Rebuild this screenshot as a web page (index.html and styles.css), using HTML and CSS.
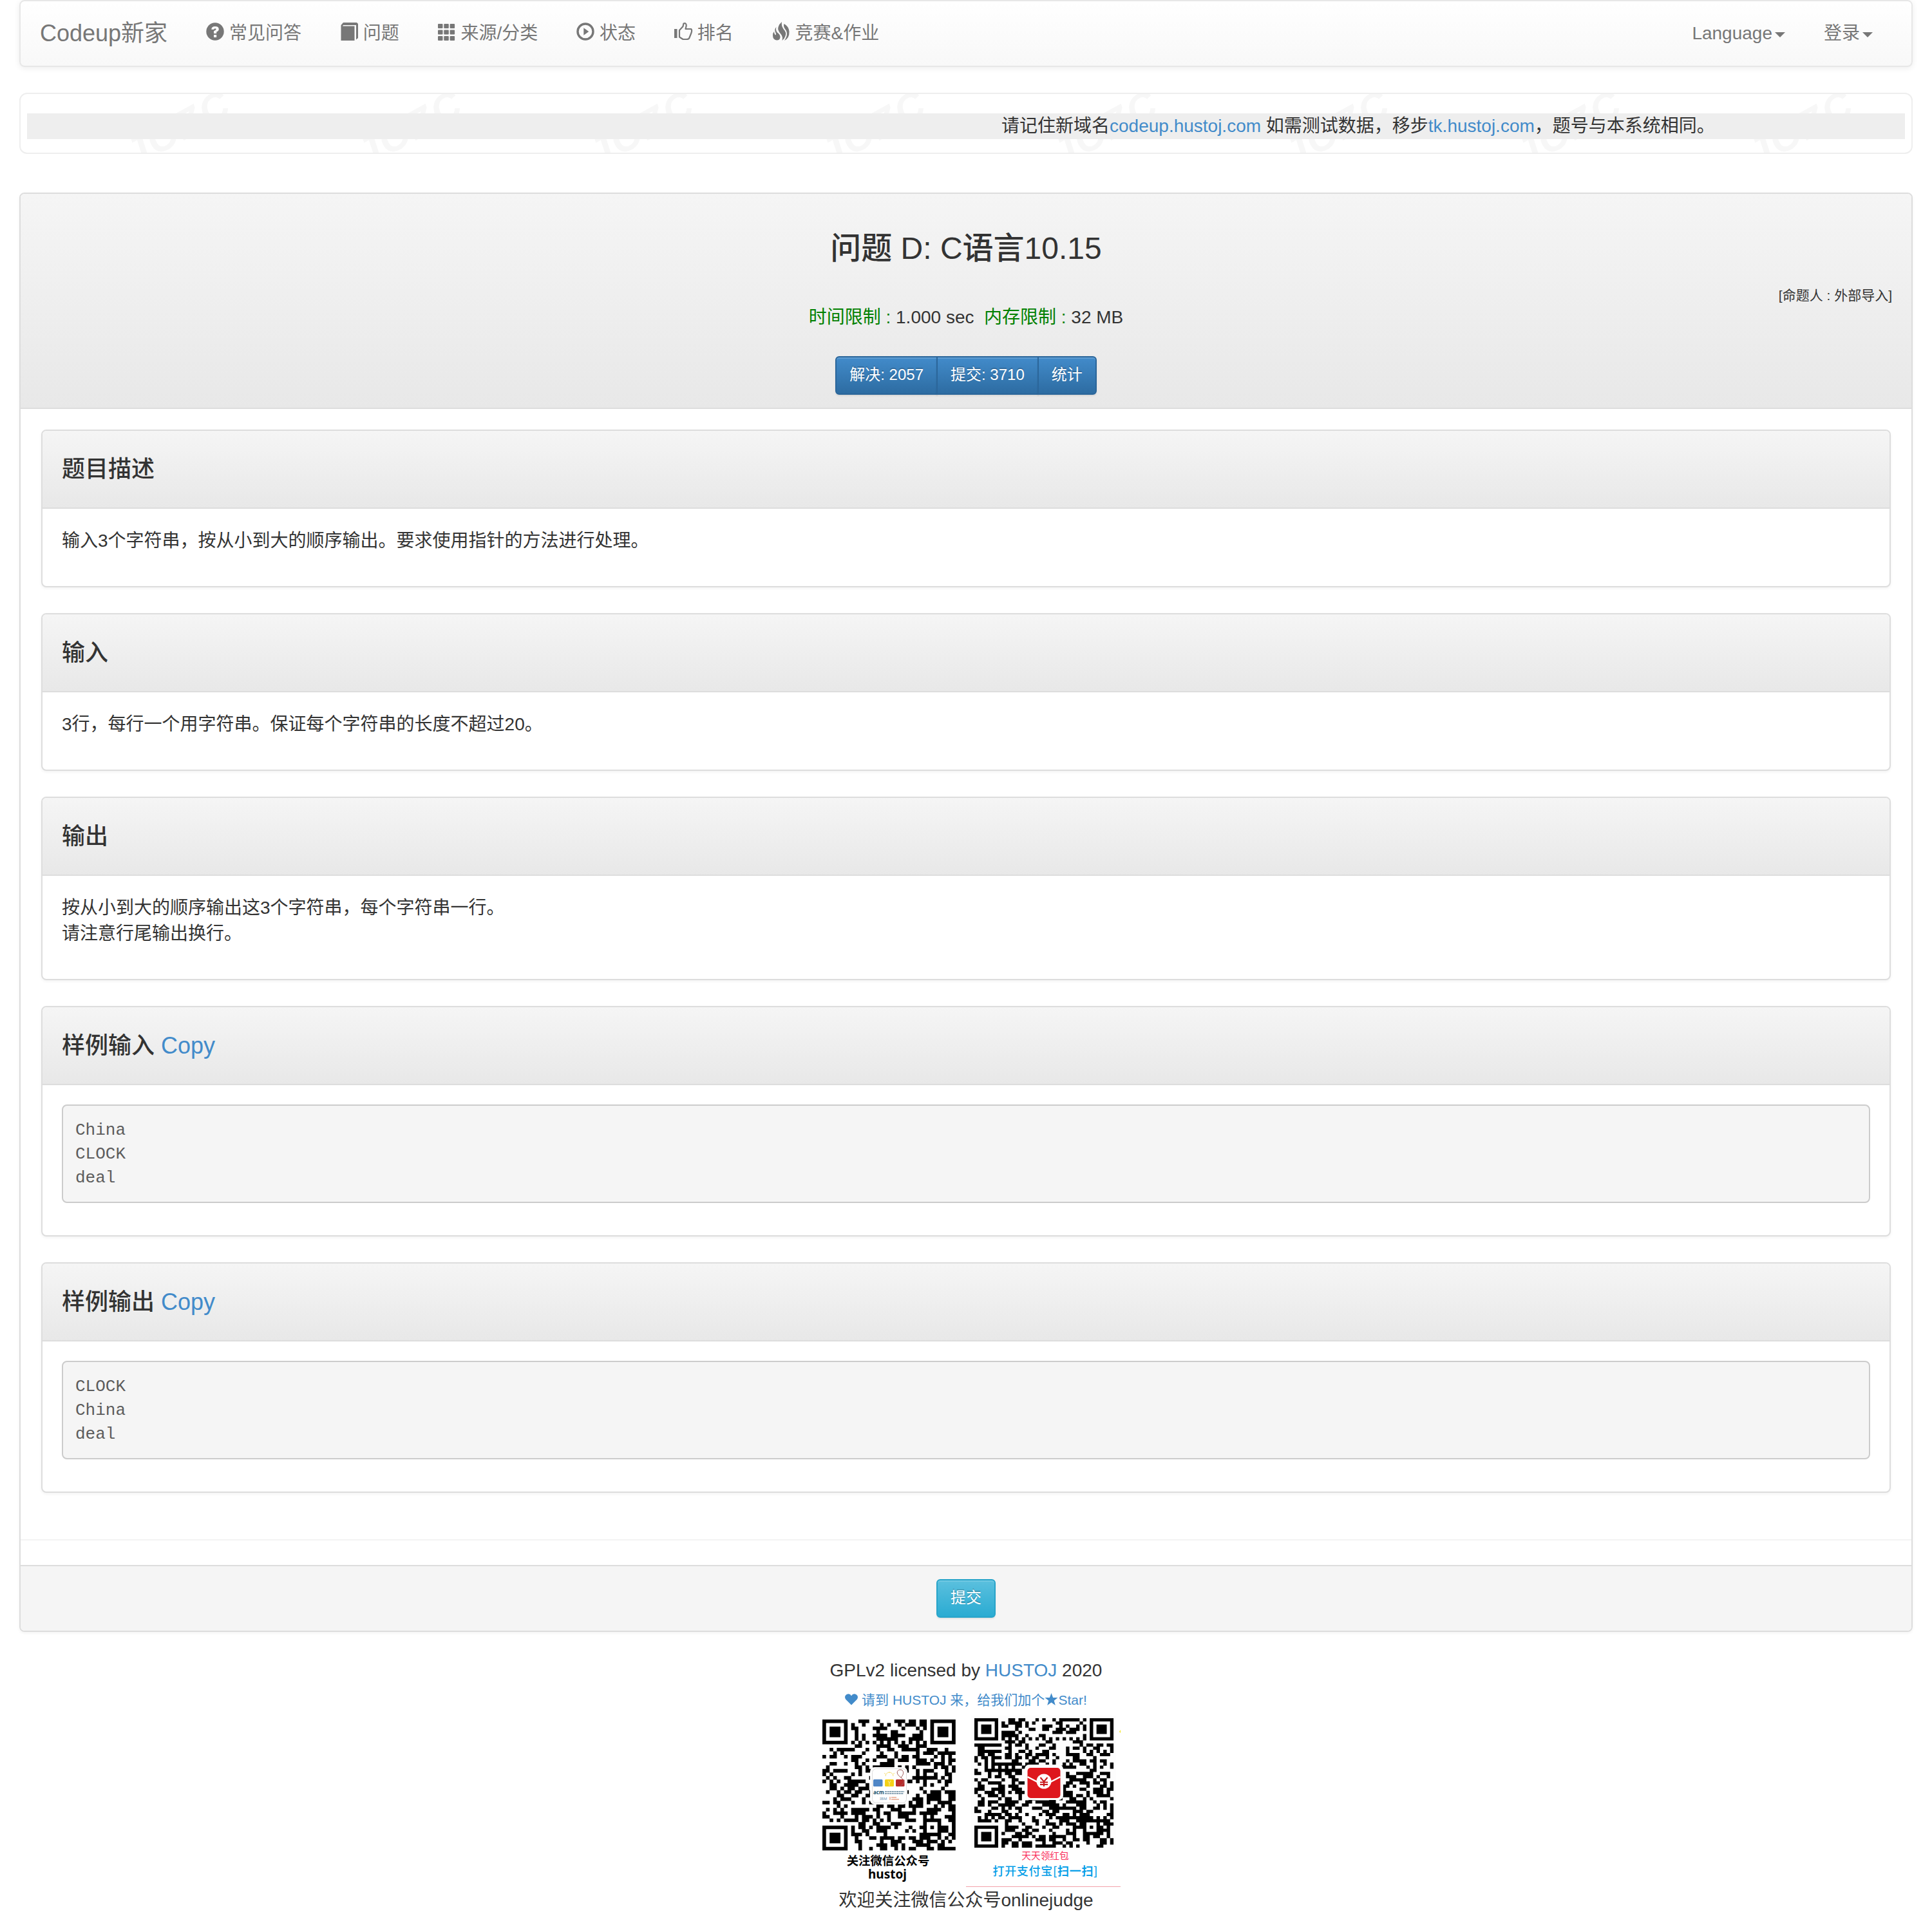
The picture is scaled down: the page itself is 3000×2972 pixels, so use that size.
FILE: index.html
```html
<!DOCTYPE html>
<html lang="zh-CN">
<head>
<meta charset="utf-8">
<title>问题 D: C语言10.15</title>
<link rel="stylesheet" href="styles.css">
</head>
<body>
<div class="container">
  <nav class="navbar">
    <a class="brand">Codeup新家</a>
    <ul class="nav">
      <li><svg class="icon" viewBox="0 0 28 28"><circle cx="14" cy="14" r="13.7" fill="currentColor"/><path d="M8.3 10.8Q8.3 6 14 6Q19.8 6 19.8 10.4Q19.8 13 16.2 14.6V17H12V13.2Q15.6 12 15.6 10.6Q15.6 9.3 14 9.3Q12.4 9.3 12.2 10.8ZM12 19H16.2V23H12Z" fill="#fbfbfb"/></svg> 常见问答</li>
      <li><svg class="icon" viewBox="0 0 28 28"><path d="M1.500 28V4L5 0H26L28 2V24L25 26.500V4H5L4 5.500H22.500V28Z" fill="currentColor"/></svg> 问题</li>
      <li><svg class="icon" viewBox="0 0 28 28"><g fill="currentColor"><rect x="0" y="2" width="7.5" height="7" rx="1"/><rect x="9.3" y="2" width="7.5" height="7" rx="1"/><rect x="18.6" y="2" width="7.5" height="7" rx="1"/><rect x="0" y="11.5" width="7.5" height="7" rx="1"/><rect x="9.3" y="11.5" width="7.5" height="7" rx="1"/><rect x="18.6" y="11.5" width="7.5" height="7" rx="1"/><rect x="0" y="21" width="7.5" height="7" rx="1"/><rect x="9.3" y="21" width="7.5" height="7" rx="1"/><rect x="18.6" y="21" width="7.5" height="7" rx="1"/></g></svg> 来源/分类</li>
      <li><svg class="icon" viewBox="0 0 28 28"><circle cx="14" cy="14" r="12" fill="none" stroke="currentColor" stroke-width="3.4"/><path d="M11.3 8.3L19.3 14L11.3 19.7Z" fill="currentColor"/></svg> 状态</li>
      <li><svg class="icon" viewBox="0 0 28 28"><path d="M0 10H4.5V24H0Z" fill="currentColor"/><path d="M8 12L13.5 6L14.5 1.5Q19 .2 18.7 5L17.5 10H26Q28 11.5 26.5 16L23.5 23.5Q23 26 19 26H13.5L8 22.5Z" fill="none" stroke="currentColor" stroke-width="2.2" stroke-linejoin="round"/></svg> 排名</li>
      <li><svg class="icon" viewBox="0 0 28 28"><path d="M15-1Q14 5 17.500 10Q23 16 20.500 21Q19.500 24.500 15.500 28Q17 22 13.500 18Q8 12 9.500 7Q11 2 15-1ZM6.500 7Q5 11 7.500 15Q13 19 12.500 23Q12 27.500 7 27.500Q1 27 1 20Q1 16 3 14Q3 18 5 19.500Q7 19 5 15Q3 10 6.500 7ZM18.500 2Q26 6 26.500 14Q27 24 19 28Q23 22 23 17Q23 13 20 10Q17 6 18.500 2Z" fill="currentColor"/></svg> 竞赛&amp;作业</li>
    </ul>
    <ul class="nav nav-right">
      <li>Language<span class="caret"></span></li>
      <li>登录<span class="caret"></span></li>
    </ul>
  </nav>

  <section class="notice">
    <svg class="notice-mark" width="2936" height="92"><defs><pattern id="mark" width="360" height="92" patternUnits="userSpaceOnUse"><text x="176" y="115" transform="rotate(-29 176 115)" textLength="176">JOZC</text></pattern></defs><rect width="2936" height="92" fill="url(#mark)"/></svg>
    <p class="marquee">请记住新域名<a>codeup.hustoj.com</a> 如需测试数据，移步<a>tk.hustoj.com</a>，题号与本系统相同。</p>
  </section>

  <main class="panel problem">
    <header class="panel-heading problem-heading">
      <h1>问题 D: C语言10.15</h1>
      <div class="author">[命题人 : 外部导入]</div>
      <div class="limits"><span>时间限制 : </span>1.000 sec&nbsp; <span>内存限制 : </span>32 MB</div>
      <div class="btn-group"><a class="btn primary">解决: 2057</a><a class="btn primary">提交: 3710</a><a class="btn primary">统计</a></div>
    </header>
    <div class="problem-body">
      <section class="panel">
        <header class="panel-heading"><h2>题目描述</h2></header>
        <div class="panel-body"><p>输入3个字符串，按从小到大的顺序输出。要求使用指针的方法进行处理。</p></div>
      </section>
      <section class="panel">
        <header class="panel-heading"><h2>输入</h2></header>
        <div class="panel-body"><p>3行，每行一个用字符串。保证每个字符串的长度不超过20。</p></div>
      </section>
      <section class="panel">
        <header class="panel-heading"><h2>输出</h2></header>
        <div class="panel-body"><p>按从小到大的顺序输出这3个字符串，每个字符串一行。<br>请注意行尾输出换行。</p></div>
      </section>
      <section class="panel">
        <header class="panel-heading"><h2>样例输入 <a>Copy</a></h2></header>
        <div class="panel-body"><pre>China
CLOCK
deal</pre></div>
      </section>
      <section class="panel">
        <header class="panel-heading"><h2>样例输出 <a>Copy</a></h2></header>
        <div class="panel-body"><pre>CLOCK
China
deal</pre></div>
      </section>
    </div>
    <hr>
    <footer class="panel-footer"><a class="btn info">提交</a></footer>
  </main>

  <footer class="page-footer">
    <div>GPLv2 licensed by <a>HUSTOJ</a> 2020</div>
    <div class="star-line"><a><svg class="icon-small" viewBox="0 0 20 20"><path d="M10 18.500L1.500 10Q-1 7 .8 3.700Q2.500 1 5.500 1.200Q8.500 1.400 10 4.300Q11.500 1.400 14.500 1.200Q17.500 1 19.200 3.700Q21 7 18.500 10Z" fill="currentColor"/></svg> 请到 HUSTOJ 来，给我们加个<svg class="icon-small star" viewBox="0 0 20 20"><path d="M10 0L12.600 7H20L14.200 11.700L16.300 19L10 14.600L3.700 19L5.800 11.700L0 7H7.400Z" fill="currentColor"/></svg>Star!</a></div>
    <div class="codes">
      <svg width="240" height="270" viewBox="0 0 240 270">
        <path class="qr" data-size="37" data-seed="2057" transform="translate(17 10) scale(5.586 5.490)"/>
        <rect x="91" y="84" width="58" height="58" rx="7" fill="#fff"/>
        <rect x="94.500" y="86.500" width="53" height="53" rx="6" fill="#fff" stroke="#ddd"/>
        <rect x="96" y="103" width="14.500" height="11" rx="1.500" fill="#4f86c6"/>
        <rect x="114" y="103" width="14" height="11" rx="1.500" fill="#f5d117"/>
        <path d="M115 98A6 6 0 0 1 127 98M121 93V91M115 95L113 93M127 95L129 93" fill="none" stroke="#f7df72"/>
        <path d="M119 105L121 109L123 105M121 109V113" fill="none" stroke="#f5e99d"/>
        <rect x="131" y="103" width="13.500" height="11" rx="1.500" fill="#b72a2a"/>
        <path d="M139 100C130 94 133 88 138 88S145 94 139 100L143 104Q145 109 138 113" fill="none" stroke="#9e5a5a"/>
        <text x="96" y="126" class="acm">acm</text>
        <path d="M114 122H144M114 125H143" stroke="#66879c" stroke-width="1.300" stroke-dasharray="3 .6"/>
        <text x="106" y="135" class="ibm">IBM</text>
        <path d="M122 130V135M124 131H132M124 134H136" stroke="#dd7950"/>
        <text x="119" y="236" class="cap-black">关注微信公众号</text>
        <text x="118" y="257" class="cap-black latin">hustoj</text>
      </svg>
      <svg width="240" height="270" viewBox="0 0 240 270">
        <rect x="8" y="4" width="225" height="209" fill="#fdfdfd"/>
        <path class="qr" data-size="41" data-seed="3710" transform="translate(13 8) scale(5.268 4.902)"/>
        <rect x="91" y="80" width="60" height="55" rx="7" fill="#fdfdfd"/>
        <rect x="95.500" y="85" width="51" height="47" rx="5" fill="#de171d"/>
        <path d="M95.500 99L111 107H131L146.500 99" fill="none" stroke="#fff" stroke-width="2.500"/>
        <circle cx="121" cy="106" r="11.500" fill="#fff"/>
        <path d="M115.500 100L121 106.500L126.500 100M121 106V114M115 107.500H127M115 111H127" fill="none" stroke="#c7161b" stroke-width="2"/>
        <text x="123" y="227" class="cap-pink">天天领红包</text>
        <text x="123" y="252" class="cap-blue" textLength="163">打开支付宝[<tspan font-weight="700">扫一扫</tspan>]</text>
        <path d="M238 29L240 26V31Z" fill="#f4e524"/>
        <path d="M0 269.500H240" stroke="#f3a3ab"/>
      </svg>
    </div>
    <div class="follow">欢迎关注微信公众号onlinejudge</div>
  </footer>
</div>
<script src="qr.js"></script>
</body>
</html>
```
FILE: qr.js
```js
// Fills each .qr path with a module grid: finders, timing, alignment and data cells.
document.querySelectorAll('.qr').forEach(function (path) {
  var n = +path.dataset.size;
  var state = +path.dataset.seed;
  var d = '';
  function random() {
    state = (Math.imul(state, 1664525) + 1013904223) >>> 0;
    return state / 4294967296;
  }
  function ring(x, y, cx, cy) {
    return Math.max(Math.abs(x - cx), Math.abs(y - cy));
  }
  for (var y = 0; y < n; y++) {
    for (var x = 0; x < n; x++) {
      var on = random() < 0.5;
      if (x === 6 || y === 6) on = (x + y) % 2 === 0;
      var align = ring(x, y, n - 7, n - 7);
      if (align <= 2) on = align !== 1;
      [[3, 3], [n - 4, 3], [3, n - 4]].forEach(function (c) {
        var r = ring(x, y, c[0], c[1]);
        if (r <= 4) on = r !== 2 && r !== 4;
      });
      if (on) d += 'M' + x + ' ' + y + 'h1.02v1.02h-1.02z';
    }
  }
  path.setAttribute('d', d);
});
```
FILE: styles.css
```css
* { box-sizing: border-box; }
body {
  margin: 0;
  background: #fff;
  color: #333;
  font: 28px/40px "Liberation Sans", "Noto Sans CJK SC", sans-serif;
}
a { color: #428bca; }
h1, h2 { font-weight: 500; }
p { margin: 0 0 20px; }
.container { padding: 0 30px; }

.navbar {
  display: flex;
  height: 104px;
  margin-bottom: 40px;
  border: 2px solid #e7e7e7;
  border-radius: 8px;
  background: linear-gradient(#fff, #f8f8f8);
  box-shadow: inset 0 2px 0 rgba(255,255,255,.15), 0 2px 10px rgba(0,0,0,.075);
  color: #777;
  text-shadow: 0 2px 0 rgba(255,255,255,.25);
}
.brand { padding: 30px; font-size: 36px; color: #777; white-space: nowrap; }
.nav { display: flex; margin: 0; padding: 0; list-style: none; white-space: nowrap; }
.nav li { padding: 30px; }
.nav-right { margin-left: auto; padding-right: 30px; }
.icon { width: 28px; height: 28px; vertical-align: -2px; overflow: visible; }
.caret {
  display: inline-block;
  margin-left: 4px;
  border: 8px solid transparent;
  border-top-color: currentColor;
  border-bottom: 0;
  vertical-align: middle;
}

.notice {
  position: relative;
  height: 95px;
  margin-bottom: 60px;
  padding: 30px 10px;
  border: 2px solid #eee;
  border-radius: 12px;
  overflow: hidden;
}
.notice-mark { position: absolute; left: 0; top: 0; }
.notice-mark text { fill: #f7f7f7; font: italic bold 62px "Liberation Sans", sans-serif; }
.marquee {
  position: relative;
  margin: 0;
  padding-left: 1513px;
  background: #eee;
  white-space: nowrap;
}

.panel {
  border: 2px solid #ddd;
  border-radius: 8px;
  background: #fff;
  box-shadow: 0 2px 4px rgba(0,0,0,.05);
}
.panel-heading {
  padding: 20px 30px;
  border-bottom: 2px solid #ddd;
  border-radius: 6px 6px 0 0;
  background: linear-gradient(#f5f5f5, #e8e8e8);
}
.panel-heading h2 { margin: 20px 0; font-size: 36px; line-height: 39px; }
.problem-heading { height: 334px; text-align: center; }
.problem-heading h1 { margin: 38px 0 27px; font-size: 48px; line-height: 53px; }
.author { height: 34px; font-size: 21px; line-height: 40px; text-align: right; }
.limits span { color: #008000; }
.btn-group { display: flex; justify-content: center; margin-top: 40px; }
.btn {
  display: inline-block;
  padding: 9px 20px 11px;
  border: 2px solid;
  border-radius: 6px;
  color: #fff;
  font-size: 24px;
  line-height: 36px;
  text-shadow: 0 -2px 0 rgba(0,0,0,.2);
  box-shadow: inset 0 2px 0 rgba(255,255,255,.15), 0 2px 2px rgba(0,0,0,.075);
}
.primary { border-color: #2b669a; background: linear-gradient(#428bca, #2d6ca2); }
.info { border-color: #28a4c9; background: linear-gradient(#5bc0de, #2aabd2); }
.btn-group .btn + .btn { margin-left: -2px; }
.btn-group .btn:not(:last-child) { border-top-right-radius: 0; border-bottom-right-radius: 0; }
.btn-group .btn:not(:first-child) { border-top-left-radius: 0; border-bottom-left-radius: 0; }

.problem-body { display: flex; flex-direction: column; gap: 40px; padding: 32px 32px 72px; }
.panel-body { padding: 30px; }
pre {
  margin: 0 0 20px;
  padding: 20px 19px;
  height: 153px;
  border: 2px solid #ccc;
  border-radius: 8px;
  background: #f5f5f5;
  color: #5c5c5c;
  font: 26px/37px "Liberation Mono", monospace;
}
hr { margin: 0 0 38px; border: 0; border-top: 2px solid #f3f3f3; }
.panel-footer {
  display: flex;
  justify-content: center;
  padding: 20px;
  border-top: 2px solid #ddd;
  border-radius: 0 0 6px 6px;
  background: #f5f5f5;
}

.page-footer { padding-top: 40px; text-align: center; }
.star-line { height: 46px; font-size: 21px; line-height: 52px; }
.icon-small { width: 20px; height: 20px; vertical-align: -2px; }
.star { width: 21px; }
.codes { display: flex; justify-content: center; }
.codes svg { display: block; }
.codes text { text-anchor: middle; font-family: "Noto Sans CJK SC", sans-serif; }
.codes .acm, .codes .ibm { text-anchor: start; font-family: "Noto Sans", sans-serif; }
.acm { font-size: 8px; font-weight: 700; fill: #21536d; }
.ibm { font-size: 6px; fill: #6a91b4; }
.cap-black { font-size: 18.400px; font-weight: 700; fill: #000; }
.codes .latin { font-family: "Noto Sans", sans-serif; font-size: 19px; }
.cap-pink { font-size: 14.700px; fill: #f9305c; }
.cap-blue { font-size: 18px; font-weight: 500; fill: #099fe8; }
.follow { padding-top: 1px; }
```
